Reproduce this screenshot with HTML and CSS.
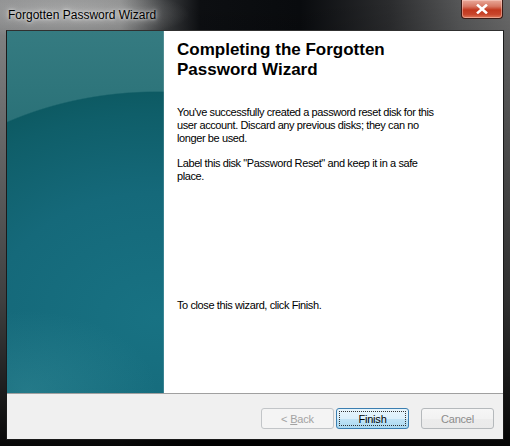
FILE: index.html
```html
<!DOCTYPE html>
<html>
<head>
<meta charset="utf-8">
<link rel="stylesheet" href="styles.css">
</head>
<body>
<div class="window">
  <div class="titlebar">
    <span class="title">Forgotten Password Wizard</span>
    <div class="close"><svg width="12" height="10" viewBox="0 0 12 10"><path d="M2 1.5 L10 8.5 M10 1.5 L2 8.5" stroke="#fff" stroke-width="2.6" stroke-linecap="square"/></svg></div>
  </div>
  <div class="client">
    <div class="main">
      <div class="side"></div>
      <div class="content">
        <h1 class="heading">Completing the Forgotten<br>Password Wizard</h1>
        <p class="para first">You've successfully created a password reset disk for this<br>user account. Discard any previous disks; they can no<br>longer be used.</p>
        <p class="para">Label this disk "Password Reset" and keep it in a safe<br>place.</p>
        <p class="para last">To close this wizard, click Finish.</p>
      </div>
    </div>
    <div class="footer">
      <button class="btn disabled">&lt; <u>B</u>ack</button>
      <button class="btn default"><span class="focus">Finish</span></button>
      <button class="btn cancel">Cancel</button>
    </div>
  </div>
</div>
</body>
</html>
```

FILE: styles.css
```css
html, body {
  margin: 0;
  padding: 0;
  background: #000;
}
.window {
  width: 510px;
  height: 446px;
  box-sizing: border-box;
  padding: 0 6px 6px 6px;
  display: flex;
  flex-direction: column;
  font-family: "Liberation Sans", Arial, sans-serif;
  background:
    linear-gradient(to bottom, rgba(0,0,0,0) 0, rgba(0,0,0,0.1) 40px, rgba(0,0,0,0.55) 300px, rgba(0,0,0,0.95) 446px),
    radial-gradient(ellipse 120px 26px at 70px 14px, rgba(200,200,200,0.55), rgba(200,200,200,0) 100%),
    linear-gradient(to right, #8c8d8e 0, #888989 120px, #3a3c3e 165px, #0d0f12 200px, #090b0e 300px, #2b2c2e 390px, #565758 460px, #6a6a6a 510px);
}
.titlebar {
  height: 30px;
  flex: none;
  display: flex;
  align-items: flex-start;
  position: relative;
}
.title {
  margin: 8px 0 0 2px;
  font-size: 12px;
  line-height: 14px;
  color: #000;
  text-shadow: 0 0 6px rgba(255,255,255,0.9), 0 0 3px rgba(255,255,255,0.7);
}
.close {
  position: absolute;
  right: 1px;
  top: 0;
  width: 42px;
  height: 19px;
  box-sizing: border-box;
  border: 1px solid #3b1a14;
  border-top: none;
  border-radius: 0 0 4px 4px;
  background: linear-gradient(to bottom, #e9a99a 0, #d77864 35%, #c2381e 55%, #c8452b 80%, #e07a5a 100%);
  box-shadow: inset 0 0 0 1px rgba(255,220,210,0.45);
  display: flex;
  align-items: center;
  justify-content: center;
}
.client {
  flex: 1;
  display: flex;
  flex-direction: column;
  border: 1px solid #1a1a1a;
  border-top-color: #303030;
  background: #f0f0f0;
}
.main {
  height: 362px;
  display: flex;
  background: #fff;
  border-bottom: 1px solid #a0a0a0;
}
.side {
  width: 157px;
  flex: none;
  background:
    radial-gradient(ellipse 130px 80px at 20px 360px, rgba(80,170,180,0.25), rgba(80,170,180,0) 100%),
    radial-gradient(ellipse 300px 226px at 150px 286px, #187283 0, #15697a 55%, #0f5e69 90%, #0d5a63 99.4%, rgba(13,90,99,0) 100%),
    linear-gradient(to bottom, #357b81 0, #2e757b 60px, #2a7077 100px, #1a6d7d 362px);
  box-shadow: inset -1px 0 0 rgba(255,255,255,0.15);
}
.content {
  flex: 1;
  padding: 9px 13px 0 13px;
  display: flex;
  flex-direction: column;
}
.heading {
  margin: 0;
  font-size: 17px;
  line-height: 20px;
  font-weight: bold;
  color: #000;
}
.para {
  margin: 12px 0 0 0;
  font-size: 11px;
  line-height: 13px;
  letter-spacing: -0.4px;
  color: #000;
}
.para.first {
  margin-top: 26px;
}
.para.last {
  margin-top: 116px;
}
.footer {
  flex: 1;
  display: flex;
  justify-content: flex-end;
  align-items: flex-start;
  padding: 14px 9px 0 0;
}
.btn {
  width: 73px;
  height: 21px;
  margin-left: 12px;
  padding: 0;
  font-family: "Liberation Sans", Arial, sans-serif;
  font-size: 11px;
  letter-spacing: -0.2px;
  border-radius: 3px;
  border: 1px solid #b5b9bc;
  background: linear-gradient(to bottom, #f6f6f6 0, #f2f2f2 50%, #ececec 51%, #eaeaea 100%);
  color: #8a8a8a;
}
.btn.disabled {
  margin-left: 0;
  background: #f4f4f4;
  border-color: #c2c5c8;
  color: #a3a3a3;
}
.btn.disabled u {
  text-decoration: underline;
}
.btn.default {
  margin-left: 2px;
  border-color: #3c7fb1;
  background: linear-gradient(to bottom, #e8f5fc 0, #dcf0fb 50%, #c2e4f6 51%, #a9d9f2 100%);
  color: #000;
  padding: 2px;
}
.focus {
  display: flex;
  align-items: center;
  justify-content: center;
  height: 100%;
  box-sizing: border-box;
  border: 1px dotted #333;
}
.btn.cancel {
  color: #8c8c8c;
}
```
